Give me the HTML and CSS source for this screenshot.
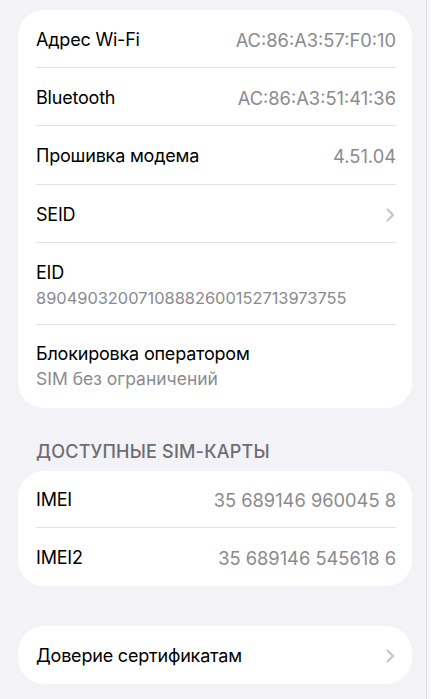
FILE: index.html
```html
<!DOCTYPE html>
<html lang="ru">
<head>
<meta charset="utf-8">
<link rel="stylesheet" href="styles.css">
</head>
<body>
<div class="screen">
  <div class="card">
    <div class="row"><span class="label">Адрес Wi-Fi</span><span class="value">AC:86:A3:57:F0:10</span></div>
    <div class="row"><span class="label">Bluetooth</span><span class="value">AC:86:A3:51:41:36</span></div>
    <div class="row tall"><span class="label">Прошивка модема</span><span class="value">4.51.04</span></div>
    <div class="row"><span class="label">SEID</span><svg class="chev" width="9" height="14" viewBox="0 0 9 14"><path d="M1.5 1.5 L7 7 L1.5 12.5" fill="none" stroke="#c4c4c7" stroke-width="2" stroke-linecap="round" stroke-linejoin="round"/></svg></div>
    <div class="row two"><span class="label">EID</span><span class="sub digits">89049032007108882600152713973755</span></div>
    <div class="row two last"><span class="label">Блокировка оператором</span><span class="sub">SIM без ограничений</span></div>
  </div>
  <div class="header">ДОСТУПНЫЕ SIM-КАРТЫ</div>
  <div class="card">
    <div class="row short"><span class="label">IMEI</span><span class="value">35 689146 960045 8</span></div>
    <div class="row"><span class="label">IMEI2</span><span class="value">35 689146 545618 6</span></div>
  </div>
  <div class="card third">
    <div class="row"><span class="label">Доверие сертификатам</span><svg class="chev" width="9" height="14" viewBox="0 0 9 14"><path d="M1.5 1.5 L7 7 L1.5 12.5" fill="none" stroke="#c4c4c7" stroke-width="2" stroke-linecap="round" stroke-linejoin="round"/></svg></div>
  </div>
</div>
</body>
</html>
```
FILE: styles.css
```css
html {
  background: #f7f7fa;
}
body {
  margin: 0;
  font-family: Inter, "Noto Sans", sans-serif;
  -webkit-font-smoothing: antialiased;
}
.screen {
  width: 427px;
  min-height: 699px;
  box-sizing: border-box;
  background: #f2f2f7;
  border-right: 1px solid #dcdce1;
  padding: 10px 0 0 18px;
}
.card {
  width: 394px;
  background: #ffffff;
  border-radius: 26px;
  padding: 0 16px 0 18px;
  box-sizing: border-box;
}
.row {
  height: 58px;
  padding-top: 2px;
  display: flex;
  align-items: center;
  justify-content: space-between;
  border-bottom: 1px solid #e3e3e6;
  box-sizing: border-box;
}
.row.tall {
  height: 59px;
}
.row.short {
  height: 57px;
}
.card > .row:last-child {
  border-bottom: none;
}
.row.two {
  height: 82px;
  padding-top: 18px;
  flex-direction: column;
  align-items: flex-start;
  justify-content: flex-start;
}
.row.two.last {
  height: 83px;
  padding-top: 17px;
}
.label {
  font-size: 18px;
  letter-spacing: -0.2px;
  color: #000;
  line-height: 24px;
}
.value {
  font-size: 18.3px;
  color: #8a8a8e;
  line-height: 24px;
}
.sub {
  font-size: 17.5px;
  color: #8a8a8e;
  line-height: 26px;
}
.sub.digits {
  font-size: 16.4px;
}
.chev {
  margin-right: 1px;
}
.header {
  font-size: 18px;
  font-weight: 500;
  color: #6d6d72;
  padding: 34px 0 9px 18px;
  line-height: 20px;
  letter-spacing: 0.2px;
}
.third {
  margin-top: 40px;
}
```
